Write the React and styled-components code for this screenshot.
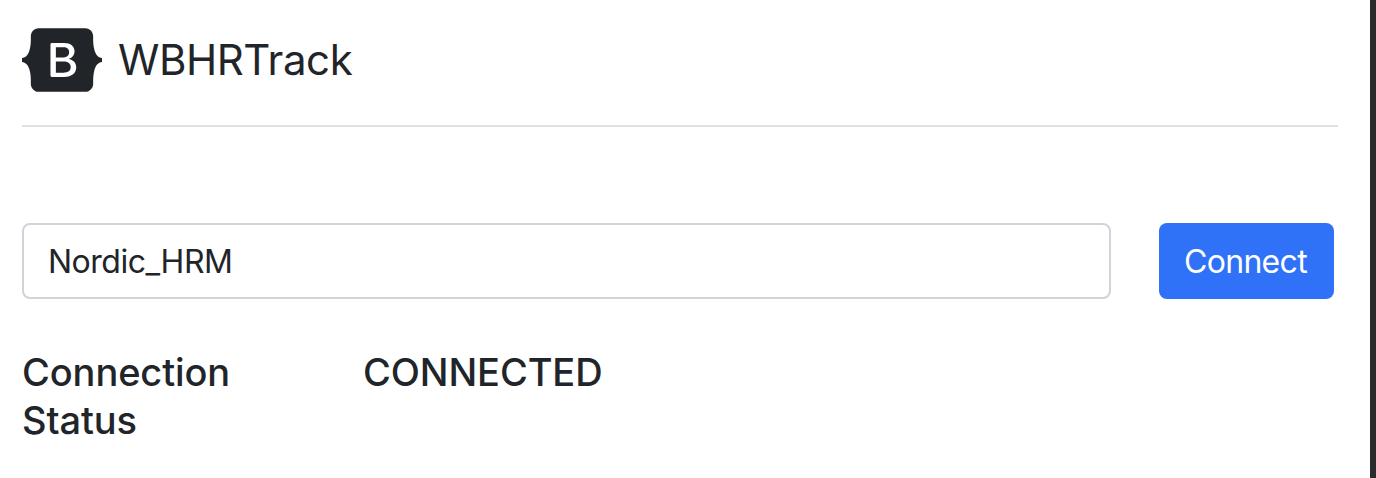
import React from 'react';
import styled, { createGlobalStyle } from 'styled-components';

const GlobalStyle = createGlobalStyle`
html, body {
  margin: 0;
  padding: 0;
  background: #fff;
  overflow: hidden;
}
body {
  font-family: Inter, "Liberation Sans", sans-serif;
  color: #212529;
}
* {
  box-sizing: border-box;
}
`;

const Page = styled.div`
display: flex;
height: 478px;
`;
const Content = styled.main`
flex: 1;
padding: 0 32px 0 22px;
`;
const Strip = styled.div`
width: 6px;
background: #2b2b2e;
`;
const Header = styled.header`
display: flex;
align-items: center;
gap: 16px;
height: 127px;
padding-bottom: 5px;
border-bottom: 2px solid #dee2e6;
`;
const Brand = styled.span`
font-size: 42px;
line-height: 48px;
letter-spacing: -0.45px;
`;
const ConnectRow = styled.form`
display: flex;
gap: 48px;
margin-top: 96px;
padding-right: 4px;
`;
const DeviceInput = styled.input`
flex: 1;
height: 76px;
padding: 0 24px;
border: 2px solid #ced4da;
border-radius: 8px;
font: 400 32px/48px Inter, "Liberation Sans", sans-serif;
letter-spacing: -0.5px;
color: #212529;
background: #fff;
outline: none;
`;
const ConnectButton = styled.button`
width: 175px;
height: 76px;
padding: 2px 2px 0 0;
border: 0;
border-radius: 8px;
background: #2f72f7;
color: #fff;
font: 400 32px/48px Inter, "Liberation Sans", sans-serif;
letter-spacing: -0.7px;
`;
const StatusRow = styled.div`
display: grid;
grid-template-columns: 341px 1fr;
margin-top: 49px;
`;
const StatusText = styled.h5`
margin: 0;
font-size: 38px;
line-height: 48px;
font-weight: 500;
letter-spacing: -0.1px;
max-width: 240px;
`;

const Logo = () => (
  <svg width="80" height="64" viewBox="0 0 118 94" aria-hidden="true">
    <path
      fill="#212529"
      fillRule="evenodd"
      clipRule="evenodd"
      d="M24.509 0c-6.733 0-11.715 5.893-11.492 12.284.214 6.14-.064 14.092-2.066 20.577C8.943 39.365 5.547 43.485 0 44.014v5.972c5.547.529 8.943 4.649 10.951 11.153 2.002 6.485 2.28 14.437 2.066 20.577C12.794 88.106 17.776 94 24.51 94H93.5c6.733 0 11.714-5.893 11.491-12.284-.214-6.14.064-14.092 2.066-20.577 2.009-6.504 5.396-10.624 10.943-11.153v-5.972c-5.547-.529-8.934-4.649-10.943-11.153-2.002-6.484-2.28-14.437-2.066-20.577C105.214 5.894 100.233 0 93.5 0H24.508zM80 57.863C80 66.663 73.436 72 62.543 72H44a2 2 0 01-2-2V24a2 2 0 012-2h18.437c9.083 0 15.044 4.92 15.044 12.474 0 5.302-4.01 10.049-9.119 10.88v.277C75.317 46.394 80 51.21 80 57.863zM60.521 28.34H49.948v14.934h8.905c6.884 0 10.68-2.772 10.68-7.727 0-4.643-3.264-7.207-8.012-7.207zM49.948 49.2v16.458H60.91c7.167 0 10.964-2.876 10.964-8.281 0-5.406-3.903-8.178-11.425-8.178H49.948z"
    />
  </svg>
);

const App = () => (
  <Page>
    <GlobalStyle />
    <Content>
      <Header>
        <Logo />
        <Brand>WBHRTrack</Brand>
      </Header>
      <ConnectRow onSubmit={(e) => e.preventDefault()}>
        <DeviceInput defaultValue="Nordic_HRM" />
        <ConnectButton type="submit">Connect</ConnectButton>
      </ConnectRow>
      <StatusRow>
        <StatusText>Connection Status</StatusText>
        <StatusText>CONNECTED</StatusText>
      </StatusRow>
    </Content>
    <Strip />
  </Page>
);

export default App;
